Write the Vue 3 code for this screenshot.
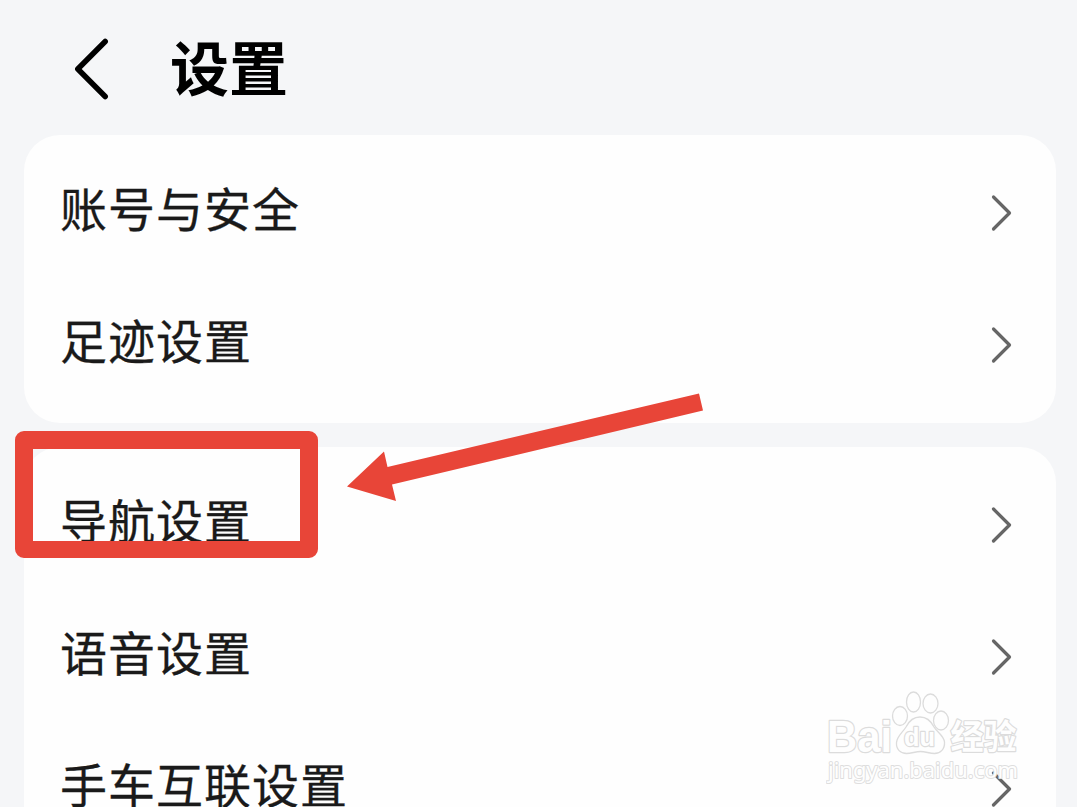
<template>
  <div class="settings-page">
    <header class="header">
      <svg class="back-icon" viewBox="0 0 36 64">
        <path d="M32.2 4.5 4.8 32l27.4 27.5" />
      </svg>
      <h1 class="title">设置</h1>
    </header>

    <main class="groups">
      <section v-for="(group, i) in groups" :key="i" class="card">
        <div v-for="item in group" :key="item" class="row">
          <span class="label">{{ item }}</span>
          <svg class="chevron" viewBox="0 0 24 40">
            <path d="M4.5 4 20.5 20l-16 16" />
          </svg>
        </div>
      </section>
    </main>

    <!-- Red frame and arrow over the list -->
    <div class="highlight"></div>
    <svg class="arrow" viewBox="0 0 360 112">
      <path d="M2 96.5 39 61.500 42.500 77 354 3.500 358 20.500 47 94.500 51 111Z" />
    </svg>

    <!-- Watermark -->
    <svg class="watermark" viewBox="0 0 200 96">
      <g class="wm-lines">
        <text x="1" y="60.500" class="wm-brand" textLength="65" lengthAdjust="spacingAndGlyphs">Bai</text>
        <ellipse cx="74" cy="25" rx="7.500" ry="9.500" />
        <ellipse cx="87.500" cy="11" rx="7" ry="10" />
        <ellipse cx="104.500" cy="12.500" rx="7.500" ry="9.500" />
        <ellipse cx="115" cy="29.500" rx="7.500" ry="9.500" />
        <path d="M94 26c7 0 11 4 14 10 3 5 10 9 10.500 15 .5 7-4 11.500-10 11.500-5 0-9-2-14-2s-9 2-14 2c-6 0-10.500-4-10-11C71 45 77 41 80 36c3-6 7-10 14-10Z" />
        <text x="78" y="55" class="wm-du" textLength="31" lengthAdjust="spacingAndGlyphs">du</text>
        <text x="124.500" y="58" class="wm-cn" textLength="66" lengthAdjust="spacingAndGlyphs">经验</text>
        <text x="2" y="87" class="wm-url" textLength="190" lengthAdjust="spacingAndGlyphs">jingyan.baidu.com</text>
      </g>
    </svg>
  </div>
</template>

<script setup>
const groups = [
  ["账号与安全", "足迹设置"],
  ["导航设置", "语音设置", "手车互联设置"],
];
</script>

<style>
body {
  margin: 0;
  overflow: hidden;
}
</style>

<style scoped>
.settings-page {
  position: relative;
  box-sizing: border-box;
  height: 100vh;
  overflow: hidden;
  background: #f5f6f8;
  font-family: "Noto Sans CJK SC", sans-serif;
}

.header {
  display: flex;
  align-items: center;
  gap: 61px;
  height: 135px;
  padding: 0 0 0 73px;
}

.back-icon {
  width: 36px;
  height: 64px;
  margin-top: 3px;
}

.back-icon path {
  fill: none;
  stroke: #000;
  stroke-width: 5.5;
  stroke-linecap: round;
  stroke-linejoin: round;
}

.title {
  margin: 0 0 3px;
  color: #000;
  font-size: 59px;
  font-weight: 700;
  line-height: 80px;
}

.groups {
  display: flex;
  flex-direction: column;
  gap: 24px;
  padding: 0 21px 0 24px;
}

.card {
  padding: 12px 43px 12px 36px;
  border-radius: 36px;
  background: #fefefe;
}

.row {
  display: flex;
  align-items: center;
  justify-content: space-between;
  height: 132px;
}

.label {
  margin-bottom: 12px;
  color: #1a1a1a;
  font-size: 47px;
  letter-spacing: 1px;
  line-height: 72px;
  -webkit-text-stroke: 0.3px #1a1a1a;
}

.chevron {
  width: 24px;
  height: 40px;
}

.chevron path {
  fill: none;
  stroke: #666;
  stroke-width: 3.2;
  stroke-linecap: round;
  stroke-linejoin: round;
}

.highlight {
  position: absolute;
  top: 431px;
  left: 15px;
  box-sizing: border-box;
  width: 303px;
  height: 127px;
  border: 18px solid #e84538;
  border-bottom-width: 17px;
  border-radius: 9px;
}

.arrow {
  position: absolute;
  top: 390px;
  left: 345px;
  width: 360px;
  height: 112px;
  fill: #e84538;
}

.watermark {
  position: absolute;
  top: 691px;
  left: 826px;
  width: 200px;
  height: 96px;
}

.wm-lines {
  fill: #fefefe;
  stroke: #dcdcdc;
  stroke-width: 1.3;
  stroke-linejoin: round;
}

.wm-lines text {
  paint-order: stroke;
  stroke-width: 2.4;
}

.wm-lines .wm-brand {
  font: 700 44px "Liberation Sans", sans-serif;
}

.wm-lines .wm-du {
  font: 700 26px "Liberation Sans", sans-serif;
}

.wm-lines .wm-cn {
  font: 700 34px "Noto Sans CJK SC", sans-serif;
}

.wm-lines .wm-url {
  font: 400 22px "Noto Sans", sans-serif;
  stroke: #dedede;
  stroke-width: 2;
}
</style>
